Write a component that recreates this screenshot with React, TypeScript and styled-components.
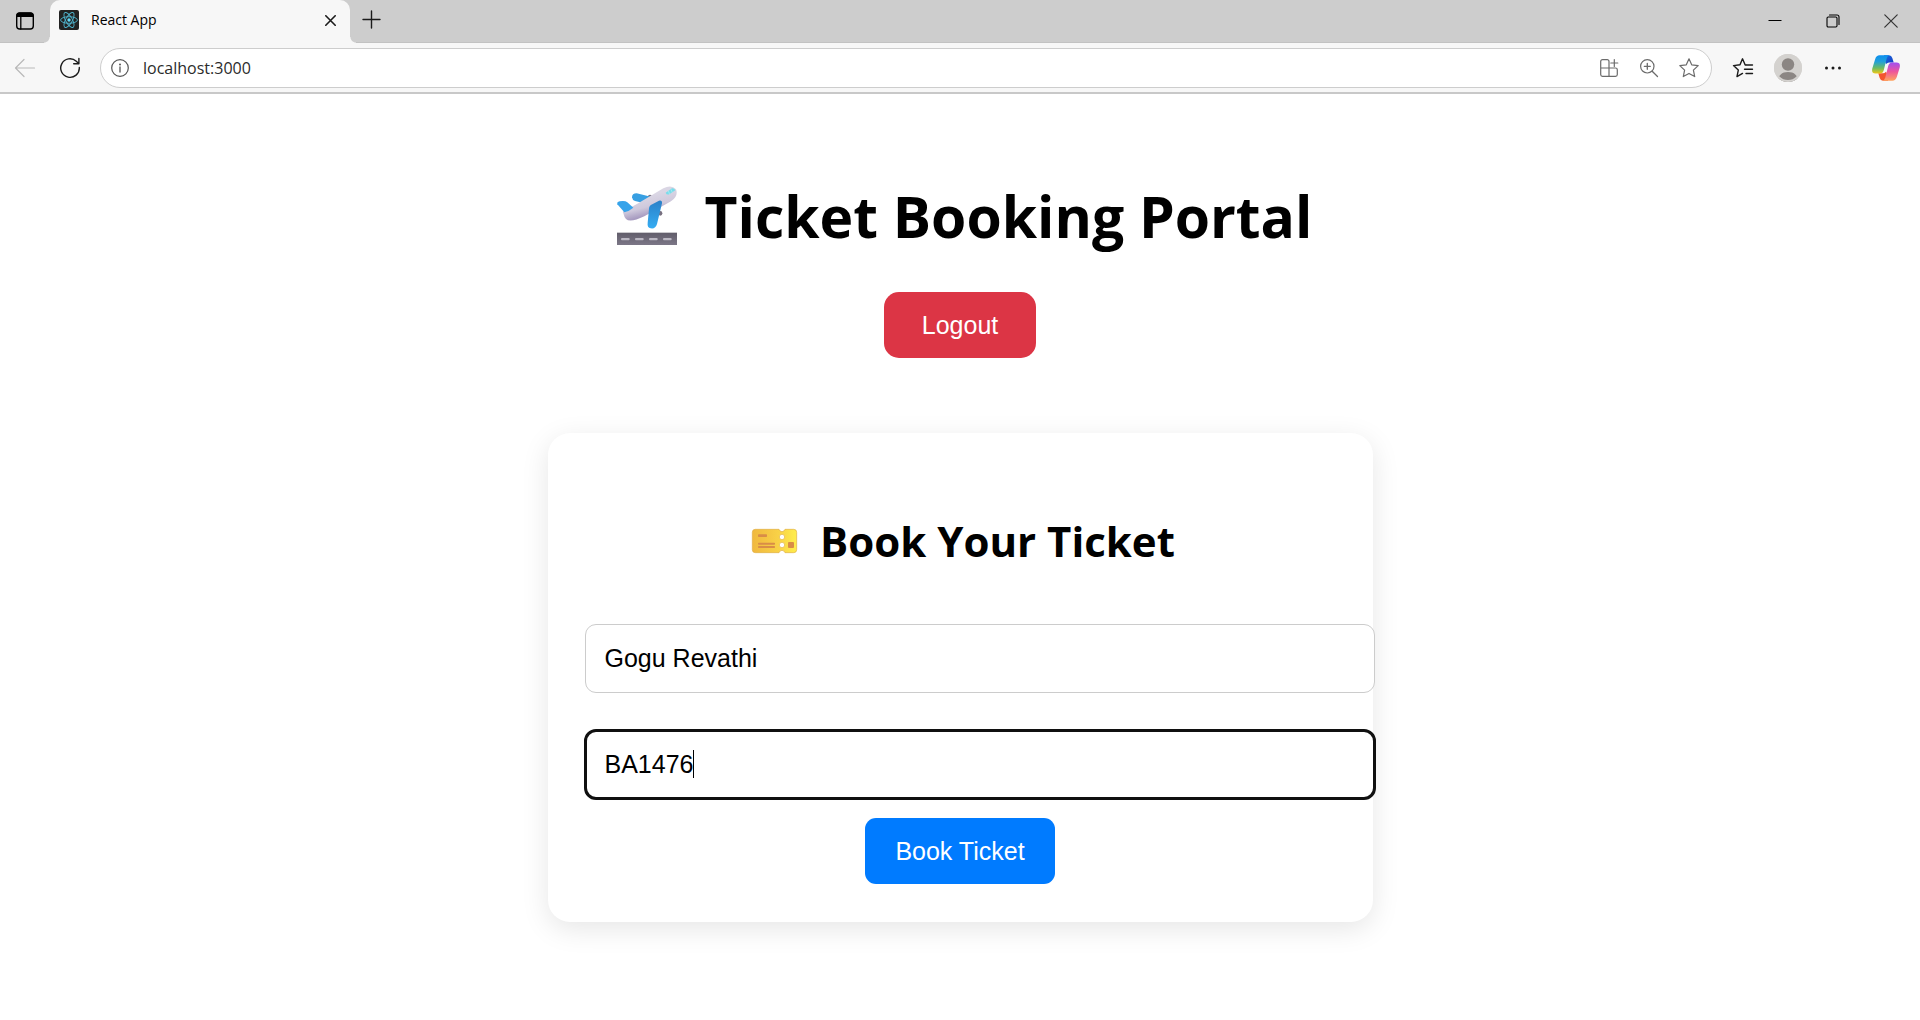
import React, { useState } from "react";
import styled, { createGlobalStyle, css } from "styled-components";

const GlobalStyle = createGlobalStyle`
  * { box-sizing: border-box; }
  body {
    margin: 0;
    background: #fff;
    color: #000;
    font-family: "Segoe UI", "Open Sans", "Noto Sans", sans-serif;
  }
  button, input { margin: 0; font: inherit; color: inherit; }
`;

const TabStrip = styled.div`
  display: flex;
  align-items: stretch;
  height: 43px;
  background: #cdcdcd;
  border-bottom: 1px solid #c2c2c2;
`;

const IconButton = styled.button<{ $w?: number; $color?: string }>`
  display: flex;
  flex: none;
  align-items: center;
  justify-content: center;
  width: ${(p) => p.$w ?? 24}px;
  padding: 0;
  border: 0;
  background: none;
  color: ${(p) => p.$color ?? "#1b1b1b"};
`;

const NewTabButton = styled(IconButton)`
  padding-bottom: 3px;
`;

const Tab = styled.div`
  position: relative;
  display: flex;
  align-items: center;
  width: 300px;
  height: 43px;
  padding: 0 8px 3px 9px;
  border-radius: 10px 10px 0 0;
  background: #f7f7f7;

  &::before,
  &::after {
    content: "";
    position: absolute;
    bottom: 0;
    width: 6px;
    height: 6px;
  }
  &::before {
    left: -6px;
    background: radial-gradient(circle at 0 0, transparent 5px, #f7f7f7 6px);
  }
  &::after {
    right: -6px;
    background: radial-gradient(circle at 100% 0, transparent 5px, #f7f7f7 6px);
  }
`;

const TabTitle = styled.span`
  flex: 1;
  margin-left: 12px;
  font-size: 14px;
  line-height: 20px;
`;

const Spacer = styled.div`
  flex: 1;
`;

const Toolbar = styled.div`
  display: flex;
  align-items: center;
  height: 51px;
  padding: 0 20px 0 13px;
  background: #f7f7f7;
  border-bottom: 2px solid #c8c8c8;
`;

const NavButtons = styled.div`
  display: flex;
  gap: 21px;
`;

const AddressBar = styled.div`
  display: flex;
  flex: 1;
  align-items: center;
  gap: 16px;
  height: 40px;
  margin: 0 17px 0 18px;
  padding: 0 10px 0 7px;
  border: 1px solid #cdcdcd;
  border-radius: 20px;
  background: #fff;
`;

const Url = styled.input`
  flex: 1;
  min-width: 0;
  margin-left: -5px;
  padding: 0;
  border: 0;
  outline: 0;
  background: none;
  color: #2b2b2b;
  font-size: 16px;
  line-height: 24px;
`;

const BrowserActions = styled.div`
  display: flex;
  gap: 17px;
  margin-right: 25px;
`;

const Page = styled.main`
  display: flex;
  flex-direction: column;
  align-items: center;
  padding: 82px 20px 96px;
`;

const Title = styled.h1`
  display: flex;
  align-items: center;
  gap: 21px;
  margin: 0 0 36px;
  font-size: 57px;
  line-height: 80px;
  font-weight: 700;
`;

const Subtitle = styled.h2`
  display: flex;
  align-items: center;
  justify-content: center;
  gap: 15px;
  margin: 41px 0 53px;
  font-size: 42px;
  line-height: 60px;
  font-weight: 700;
`;

const controlText = css`
  font-family: Arial, "Liberation Sans", sans-serif;
  font-size: 25px;
  line-height: 28px;
`;

const ActionButton = styled.button<{ $tone: "danger" | "primary" }>`
  ${controlText}
  height: 66px;
  padding: ${(p) => (p.$tone === "danger" ? "0 38px" : "0 30px")};
  border: 0;
  border-radius: ${(p) => (p.$tone === "danger" ? 15 : 11)}px;
  background: ${(p) => (p.$tone === "danger" ? "#dc3545" : "#007bff")};
  color: #fff;
`;

const Card = styled.form`
  display: flex;
  flex-direction: column;
  width: 100%;
  max-width: 825px;
  margin-top: 75px;
  padding: 37px 37px 38px;
  border-radius: 22px;
  background: #fff;
  box-shadow: 0 7px 28px rgba(0, 0, 0, 0.1);
`;

const Field = styled.label<{ $last?: boolean }>`
  position: relative;
  display: block;
  width: calc(100% + 39px);
  margin-bottom: ${(p) => (p.$last ? 19 : 37)}px;
`;

const TextInput = styled.input<{ $active?: boolean }>`
  ${controlText}
  display: block;
  width: 100%;
  height: 69px;
  padding: 0 19px;
  border: 1px solid #ccc;
  border-radius: 11px;
  background: #fff;
  outline: ${(p) => (p.$active ? "3px solid #101010" : "none")};
  outline-offset: -2px;
  caret-color: transparent;
`;

const Caret = styled.span`
  position: absolute;
  top: 20px;
  left: 108px;
  width: 1px;
  height: 28px;
  background: #000;
`;

const FormActions = styled.div`
  display: flex;
  justify-content: center;
`;

const line = (width: number) => ({
  fill: "none",
  stroke: "currentColor",
  strokeWidth: width,
  strokeLinecap: "round" as const,
  strokeLinejoin: "round" as const,
});

const TabActionsIcon = () => (
  <svg width="20" height="20" viewBox="0 0 20 20">
    <rect x="1.7" y="2" width="16.6" height="16" rx="3" {...line(1.4)} />
    <path d="M1.5 6V4.5A3 3 0 0 1 4.500 1.500h11a3 3 0 0 1 3 3V6z" fill="currentColor" />
    <path d="M5.800 6v12" {...line(1.3)} />
  </svg>
);

const ReactIcon = () => (
  <svg width="20" height="20" viewBox="0 0 20 20">
    <rect width="20" height="20" rx="2" fill="#222" />
    <g fill="none" stroke="#4fb5cf" strokeWidth="0.9">
      <ellipse cx="10" cy="10" rx="8.4" ry="3.3" />
      <ellipse cx="10" cy="10" rx="8.4" ry="3.3" transform="rotate(60 10 10)" />
      <ellipse cx="10" cy="10" rx="8.4" ry="3.3" transform="rotate(120 10 10)" />
    </g>
    <circle cx="10" cy="10" r="1.7" fill="#61dafb" />
  </svg>
);

const CrossIcon = ({ size = 11, width = 1.6 }: { size?: number; width?: number }) => (
  <svg width={size} height={size} viewBox={`0 0 ${size} ${size}`}>
    <path d={`M.8.8l${size - 1.6} ${size - 1.6}M${size - 0.8}.8L.8 ${size - 0.8}`} {...line(width)} />
  </svg>
);

const PlusIcon = () => (
  <svg width="19" height="19" viewBox="0 0 19 19">
    <path d="M9.500 1v17M1 9.500h17" {...line(1.4)} />
  </svg>
);

const MinimizeIcon = () => (
  <svg width="14" height="14" viewBox="0 0 14 14">
    <path d="M.5 6.500h13" {...line(1)} strokeLinecap="butt" />
  </svg>
);

const RestoreIcon = () => (
  <svg width="14" height="14" viewBox="0 0 14 14">
    <rect x="1" y="3" width="10" height="10" rx="1.200" {...line(1.1)} />
    <path d="M3.500 1h7.500a2 2 0 0 1 2 2v7.500" {...line(1.1)} />
  </svg>
);

const BackIcon = () => (
  <svg width="22" height="20" viewBox="0 0 22 20">
    <path d="M20.500 10H1.500M10 1.500L1.500 10l8.500 8.500" {...line(1.2)} />
  </svg>
);

const ReloadIcon = () => (
  <svg width="22" height="22" viewBox="0 0 22 22">
    <path d="M20.300 10.500a9.300 9.300 0 1 1-3-6.300l2.300 2.200M19.900 1.500v5.200h-5.200" {...line(1.4)} />
  </svg>
);

const InfoIcon = () => (
  <svg width="20" height="20" viewBox="0 0 20 20">
    <circle cx="10" cy="10" r="8.300" {...line(1.2)} />
    <path d="M10 9v5" {...line(1.3)} />
    <circle cx="10" cy="6.400" r="1" fill="currentColor" />
  </svg>
);

const AppsIcon = () => (
  <svg width="20" height="20" viewBox="0 0 20 20">
    <path
      d="M10 10V3.500A1.800 1.800 0 0 0 8.200 1.700H3.500a1.800 1.800 0 0 0-1.800 1.800v13a1.800 1.800 0 0 0 1.800 1.800h13a1.800 1.800 0 0 0 1.800-1.800v-4.700a1.800 1.800 0 0 0-1.800-1.800H1.700M10 10v8.300M15.300 1.500v7M11.800 5h7"
      {...line(1.2)}
    />
  </svg>
);

const ZoomIcon = () => (
  <svg width="20" height="20" viewBox="0 0 20 20">
    <circle cx="8.300" cy="8.300" r="6.700" {...line(1.2)} />
    <path d="M13.200 13.200l5.300 5.300M8.300 5.300v6M5.300 8.300h6" {...line(1.3)} />
  </svg>
);

const StarIcon = () => (
  <svg width="22" height="22" viewBox="0 0 22 22">
    <path
      d="M11 1.800l2.700 6 6.500.8-4.800 4.500 1.300 6.500L11 16.400l-5.700 3.200 1.300-6.500L1.800 8.600l6.500-.8z"
      {...line(1.2)}
    />
  </svg>
);

const FavoritesIcon = () => (
  <svg width="22" height="22" viewBox="0 0 22 22">
    <path
      d="M14 8h-.8L10.500 1.800 8 7.800l-6.500.8 4.800 4.500L5 19.600l5.500-3.200M14.200 8h6.300M12.500 12.300h8M14 16.500h6.500"
      {...line(1.4)}
    />
  </svg>
);

const Avatar = () => (
  <svg width="28" height="28" viewBox="0 0 28 28">
    <defs>
      <clipPath id="avatar">
        <circle cx="14" cy="14" r="14" />
      </clipPath>
    </defs>
    <g clipPath="url(#avatar)">
      <rect width="28" height="28" fill="#d4d2cf" />
      <circle cx="14" cy="10.500" r="6.200" fill="#8b8683" />
      <path d="M4 28c0-7 4-10 10-10s10 3 10 10z" fill="#8b8683" />
    </g>
    <circle cx="14" cy="14" r="13" fill="none" stroke="#d4d2cf" strokeWidth="2" />
  </svg>
);

const DotsIcon = () => (
  <svg width="18" height="6" viewBox="0 0 18 6" fill="currentColor">
    <circle cx="2.500" cy="3" r="1.500" />
    <circle cx="9" cy="3" r="1.500" />
    <circle cx="15.500" cy="3" r="1.500" />
  </svg>
);

const CopilotIcon = () => (
  <svg width="28" height="26" viewBox="0 0 28 26">
    <defs>
      <linearGradient id="cpLeft" x1="0" y1="0" x2="0" y2="1">
        <stop offset="0" stopColor="#0b8ff0" />
        <stop offset="0.35" stopColor="#22a0d8" />
        <stop offset="0.7" stopColor="#6cbb62" />
        <stop offset="1" stopColor="#f0c818" />
      </linearGradient>
      <linearGradient id="cpRight" x1="0" y1="0" x2="0" y2="1">
        <stop offset="0" stopColor="#a050f0" />
        <stop offset="0.5" stopColor="#ee559c" />
        <stop offset="1" stopColor="#ffa45e" />
      </linearGradient>
      <linearGradient id="cpTop" x1="0" y1="0" x2="1" y2="1">
        <stop offset="0" stopColor="#1a70dc" />
        <stop offset="1" stopColor="#1638c4" />
      </linearGradient>
    </defs>
    <path d="M12 .3h5q2.500 0 3.300 2.700l1.400 4.500H17q-1.500 0-3 1.500l-2-4z" fill="url(#cpTop)" />
    <path d="M16 25.700h-5q-2.500 0-3.300-2.700l-1.400-4.800H11q1.500 0 3-1.500l2 4z" fill="#f3552f" />
    <path
      d="M7.500.3H17.500q-2 .5-2.800 3.200L11.800 15q-.8 3.500-4 3.500H3.500Q-.8 18.500.3 13.500L3.200 4Q4.400.3 7.500.3z"
      fill="url(#cpLeft)"
    />
    <path
      d="M20.500 25.700H10.500q2-.5 2.800-3.200L16.200 11q.8-3.500 4-3.500h4.300q4.300 0 3.200 5L24.800 22q-1.200 3.700-4.300 3.700z"
      fill="url(#cpRight)"
    />
  </svg>
);

const TakeoffIcon = () => (
  <svg width="76" height="60" viewBox="24 48 228 180" aria-hidden="true">
    <defs>
      <linearGradient id="wing" x1="0" y1="0" x2="0" y2="1">
        <stop offset="0" stopColor="#2b80c8" />
        <stop offset="1" stopColor="#35adf3" />
      </linearGradient>
      <linearGradient id="hull" x1="0.4" y1="0.3" x2="0.6" y2="0.8">
        <stop offset="0" stopColor="#dad6e4" />
        <stop offset="0.55" stopColor="#cfc9dc" />
        <stop offset="1" stopColor="#a79bc0" />
      </linearGradient>
      <linearGradient id="runway" x1="0" y1="0" x2="0" y2="1">
        <stop offset="0" stopColor="#615d6a" />
        <stop offset="1" stopColor="#7c7787" />
      </linearGradient>
    </defs>
    <ellipse cx="150" cy="79" rx="6" ry="5" fill="#777080" />
    <ellipse cx="181" cy="130" rx="6" ry="7" fill="#777080" />
    <path d="M96 82q0-12 14-12l45 11-28 17-22-5q-8-3-9-11z" fill="#379fe2" />
    <path
      d="M70 130q-5-8 8-13 18-6 34-16l78-46q24-13 38 3 8 20-15 36l-80 45q-42 20-55 8-5-4-8-17z"
      fill="url(#hull)"
    />
    <path d="M52 103q-2-7 7-9 16-3 23 3l18 16q-12 10-27 14z" fill="#36a3ea" />
    <path d="M197 68l19-13q7-1 10 6l-18 12q-8 3-11-5z" fill="#78ddeb" />
    <path d="M205 63l4 10M213 58l4 10" stroke="#b7edf5" strokeWidth="2" />
    <path d="M147 116q0-9 10-13l20-11q10-2 9 8l-15 62q-5 16-19 13-11-2-9-16z" fill="url(#wing)" />
    <rect x="51" y="188" width="180" height="37" fill="url(#runway)" />
    <g fill="#bbb8c3">
      <rect x="63" y="204" width="26" height="7" rx="3" />
      <rect x="105" y="204" width="26" height="7" rx="3" />
      <rect x="147" y="204" width="26" height="7" rx="3" />
      <rect x="189" y="204" width="26" height="7" rx="3" />
    </g>
  </svg>
);

const TicketIcon = () => (
  <svg width="60" height="26" viewBox="18 84 180 78" aria-hidden="true">
    <defs>
      <linearGradient id="ticket" x1="0" y1="0" x2="1" y2="0">
        <stop offset="0" stopColor="#f0b83e" />
        <stop offset="0.6" stopColor="#f9d247" />
        <stop offset="1" stopColor="#ffee4c" />
      </linearGradient>
    </defs>
    <path
      d="M49 88h71q3 7 9 7t9-7h26q9 0 9 9v52q0 9-9 9h-26q-3-7-9-7t-9 7H49q-9 0-9-9V97q0-9 9-9z"
      fill="url(#ticket)"
      stroke="#dfae42"
      strokeWidth="2"
    />
    <g fill="#fff" stroke="#e4b440" strokeWidth="2">
      <circle cx="129" cy="111" r="8" />
      <circle cx="129" cy="135" r="8" />
    </g>
    <g fill="#d98d47">
      <rect x="57" y="103" width="27" height="8" rx="2" />
      <rect x="57" y="128" width="51" height="6" rx="2" />
      <rect x="57" y="138" width="51" height="6" rx="2" />
      <rect x="147" y="126" width="18" height="18" rx="3" />
    </g>
  </svg>
);

export default function App() {
  const [name, setName] = useState("Gogu Revathi");
  const [flight, setFlight] = useState("BA1476");

  return (
    <>
      <GlobalStyle />
      <header>
        <TabStrip>
          <IconButton $w={50} $color="#000" aria-label="Tab actions menu">
            <TabActionsIcon />
          </IconButton>
          <Tab>
            <ReactIcon />
            <TabTitle>React App</TabTitle>
            <IconButton aria-label="Close tab">
              <CrossIcon />
            </IconButton>
          </Tab>
          <NewTabButton $w={43} aria-label="New tab">
            <PlusIcon />
          </NewTabButton>
          <Spacer />
          <IconButton $w={58} $color="#000" aria-label="Minimize">
            <MinimizeIcon />
          </IconButton>
          <IconButton $w={58} $color="#000" aria-label="Restore">
            <RestoreIcon />
          </IconButton>
          <IconButton $w={58} $color="#333" aria-label="Close window">
            <CrossIcon size={14} width={1.2} />
          </IconButton>
        </TabStrip>
        <Toolbar>
          <NavButtons>
            <IconButton $color="#b9b9b9" aria-label="Back">
              <BackIcon />
            </IconButton>
            <IconButton aria-label="Refresh">
              <ReloadIcon />
            </IconButton>
          </NavButtons>
          <AddressBar>
            <IconButton $color="#555" aria-label="Site information">
              <InfoIcon />
            </IconButton>
            <Url aria-label="Address" defaultValue="localhost:3000" />
            <IconButton $color="#6b6b6b" aria-label="App available">
              <AppsIcon />
            </IconButton>
            <IconButton $color="#6b6b6b" aria-label="Zoom">
              <ZoomIcon />
            </IconButton>
            <IconButton $color="#6b6b6b" aria-label="Add to favorites">
              <StarIcon />
            </IconButton>
          </AddressBar>
          <BrowserActions>
            <IconButton $w={28} aria-label="Favorites">
              <FavoritesIcon />
            </IconButton>
            <IconButton $w={28} aria-label="Profile">
              <Avatar />
            </IconButton>
            <IconButton $w={28} aria-label="Settings and more">
              <DotsIcon />
            </IconButton>
          </BrowserActions>
          <IconButton $w={28} aria-label="Copilot">
            <CopilotIcon />
          </IconButton>
        </Toolbar>
      </header>
      <Page>
        <Title>
          <TakeoffIcon />
          Ticket Booking Portal
        </Title>
        <ActionButton $tone="danger" type="button">
          Logout
        </ActionButton>
        <Card onSubmit={(e) => e.preventDefault()}>
          <Subtitle>
            <TicketIcon />
            Book Your Ticket
          </Subtitle>
          <Field>
            <TextInput aria-label="Passenger name" value={name} onChange={(e) => setName(e.target.value)} />
          </Field>
          <Field $last>
            <TextInput
              $active
              aria-label="Flight number"
              value={flight}
              onChange={(e) => setFlight(e.target.value)}
            />
            <Caret />
          </Field>
          <FormActions>
            <ActionButton $tone="primary" type="submit">
              Book Ticket
            </ActionButton>
          </FormActions>
        </Card>
      </Page>
    </>
  );
}
